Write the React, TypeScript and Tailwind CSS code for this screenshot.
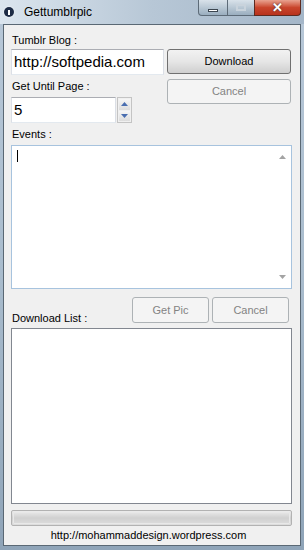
const btn =
  'flex items-center justify-center rounded-[3px] border border-[#707070] bg-gradient-to-b from-[#f2f2f2] via-[#e6e6e6] to-[#cfcfcf] text-[11px] text-black'
const btnOff =
  'flex items-center justify-center rounded-[3px] border border-[#adb2b5] bg-[#f4f4f4] text-[11px] text-[#838383]'
const box =
  'border border-[#abadb3] border-l-[#dbdfe6] border-r-[#dbdfe6] border-b-[#e3e9ef] bg-white'

const TitleButtons = () => (
  <div className="ml-auto mr-[3px] flex self-start">
    <div className="flex h-[16px] w-[30px] items-center justify-center rounded-bl-[4px] border border-t-0 border-[#5d6b78] bg-gradient-to-b from-[#d9e2ea] to-[#9aaebf]">
      <div className="mt-[5px] h-[3px] w-[10px] border border-[#3c4650] bg-white" />
    </div>
    <div className="flex h-[16px] w-[26px] items-center justify-center border-b border-[#5d6b78] bg-gradient-to-b from-[#d9e2ea] to-[#9aaebf]">
      <div className="h-[7px] w-[10px] border-2 border-[#c9d3dc]" />
    </div>
    <div className="flex h-[16px] w-[47px] items-center justify-center rounded-br-[4px] border border-t-0 border-[#5d2a20] bg-gradient-to-b from-[#e8a290] via-[#c9452c] to-[#b8321c]">
      <span className="text-[13px] font-bold leading-none text-white [text-shadow:0_0_2px_#333]">✕</span>
    </div>
  </div>
)

const Spinner = () => (
  <div className="ml-[1px] flex w-[15px] flex-col gap-[1px] border border-[#c4c4c4] bg-[#f0f0f0] p-[1px]">
    <div className="flex flex-1 items-center justify-center bg-gradient-to-b from-[#f6f6f6] to-[#dcdcdc]">
      <svg width="7" height="4" viewBox="0 0 7 4"><path d="M0 4 L3.5 0 L7 4 Z" fill="#4a6eb0" /></svg>
    </div>
    <div className="flex flex-1 items-center justify-center bg-gradient-to-b from-[#f6f6f6] to-[#dcdcdc]">
      <svg width="7" height="4" viewBox="0 0 7 4"><path d="M0 0 L3.5 4 L7 0 Z" fill="#4a6eb0" /></svg>
    </div>
  </div>
)

export default function App() {
  return (
    <div
      className="flex h-[550px] w-[304px] flex-col bg-gradient-to-b from-[#b8c8d8] via-[#a9bccd] to-[#8fa4b8] text-black"
      style={{ fontFamily: '"Liberation Sans", Arial, sans-serif' }}
    >
      {/* title bar */}
      <div className="flex h-[24px] bg-gradient-to-r from-[#dbe5ee] via-[#b7c7d6] to-[#a4b6c8]">
        <div className="flex items-center pl-[4px]">
          <div className="flex h-[10px] w-[10px] items-center justify-center rounded-full bg-[#1d2b45] shadow-[0_0_2px_#fff]">
            <div className="h-[5px] w-[2px] bg-white" />
          </div>
          <span className="ml-[10px] text-[12px]">Gettumblrpic</span>
        </div>
        <TitleButtons />
      </div>

      {/* client */}
      <div className="mx-[3px] mb-[4px] flex flex-1 flex-col border border-[#5a6874] bg-[#f0f0f0] pl-[7px] pr-[7px]">
        <div className="flex gap-[3px]">
          <div className="flex w-[153px] flex-col pt-[8px]">
            <div className="h-[16px] pl-[1px] text-[11px] leading-[14px]">Tumblr Blog :</div>
            <div className={`${box} flex h-[26px] items-center pl-[2px] text-[15px]`}>http://softpedia.com</div>
            <div className="flex h-[22px] items-center pl-[1px] text-[11px]">Get Until Page :</div>
            <div className="flex h-[26px]">
              <div className={`${box} flex w-[105px] items-center pl-[2px] text-[15px]`}>5</div>
              <Spinner />
            </div>
          </div>
          <div className="flex w-[124px] flex-col gap-[5px] pt-[24px]">
            <div className={`${btn} h-[25px]`}>Download</div>
            <div className={`${btnOff} h-[25px]`}>Cancel</div>
          </div>
        </div>

        <div className="flex h-[22px] items-center pl-[1px] text-[11px]">Events :</div>
        <div className="flex h-[144px] w-[281px] border border-[#a7c3de] bg-white">
          <div className="flex-1 pl-[5px] pt-[4px]">
            <div className="h-[12px] w-[1px] bg-black" />
          </div>
          <div className="flex w-[17px] flex-col items-center justify-between py-[9px]">
            <svg width="7" height="4" viewBox="0 0 7 4"><path d="M0 4 L3.5 0 L7 4 Z" fill="#a3a3a3" /></svg>
            <svg width="7" height="4" viewBox="0 0 7 4"><path d="M0 0 L3.5 4 L7 0 Z" fill="#a3a3a3" /></svg>
          </div>
        </div>

        <div className="mt-[8px] flex h-[31px] w-[281px] items-end">
          <div className="pb-[2px] pl-[1px] text-[11px]">Download List :</div>
          <div className="ml-auto mr-[3px] flex gap-[3px] self-start">
            <div className={`${btnOff} h-[26px] w-[77px]`}>Get Pic</div>
            <div className={`${btnOff} h-[26px] w-[77px]`}>Cancel</div>
          </div>
        </div>
        <div className="h-[176px] w-[281px] border border-[#828790] bg-white" />

        <div className="mt-[6px] h-[16px] w-[281px] rounded-[2px] border border-[#b2b2b2] bg-gradient-to-b from-[#ececec] via-[#d0d0d0] to-[#dedede] p-[1px]">
          <div className="h-full w-full rounded-[1px] border border-[#e8e8e8]" />
        </div>
        <div className="flex flex-1 items-center justify-center pr-[7px] text-[11px]">
          http://mohammaddesign.wordpress.com
        </div>
      </div>
    </div>
  )
}
